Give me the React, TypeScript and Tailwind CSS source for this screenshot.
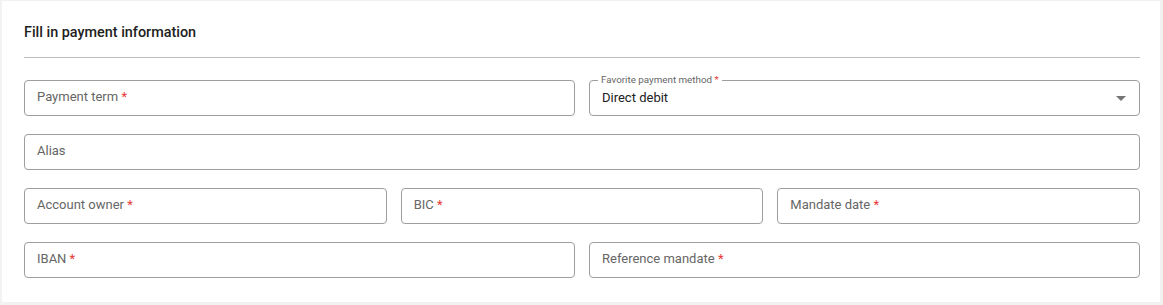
import React from 'react';

const font = { fontFamily: 'Roboto, "Liberation Sans", sans-serif' };

interface FieldProps {
  label: string;
  required?: boolean;
}

const Field: React.FC<FieldProps> = ({ label, required }) => (
  <div className="h-[36px] flex items-center rounded-[4px] border border-[#9e9e9e] px-[12px] pb-[3px] text-[13px] text-[#666666] bg-white min-w-0">
    <span>
      {label}
      {required && <span className="text-[#e53935]"> *</span>}
    </span>
  </div>
);

// select with outlined floating label
const SelectField: React.FC = () => (
  <div className="relative h-[36px] flex items-center rounded-[4px] border border-[#9e9e9e] pl-[12px] pr-[12px] bg-white">
    <span className="absolute -top-[8px] left-[8px] bg-white px-[3px] text-[9.8px] leading-[14px] text-[#666666]">
      Favorite payment method<span className="text-[#e53935]"> *</span>
    </span>
    <span className="flex-1 pb-[1px] text-[13px] text-[#212121]">Direct debit</span>
    <svg width="10" height="5" viewBox="0 0 10 5" className="mr-[1px]">
      <path d="M0 0 L10 0 L5 5 Z" fill="#757575" />
    </svg>
  </div>
);

export default function App() {
  return (
    <div className="w-[1163px] h-[305px] bg-[#f2f2f2] pt-[1px] pl-[2px]" style={font}>
      <div className="w-[1158px] h-[301px] bg-white pt-[22px] pl-[22px] pr-[20px]">
        <h2 className="text-[14.4px] leading-[20px] font-medium text-[#212121]">Fill in payment information</h2>
        <div className="mt-[14px] h-px bg-[#bdbdbd]" />
        <div className="mt-[22px] flex flex-col gap-[18px]">
          <div className="grid grid-cols-2 gap-[14px]">
            <Field label="Payment term" required />
            <SelectField />
          </div>
          <Field label="Alias" />
          <div className="grid grid-cols-3 gap-[14px]">
            <Field label="Account owner" required />
            <Field label="BIC" required />
            <Field label="Mandate date" required />
          </div>
          <div className="grid grid-cols-2 gap-[14px]">
            <Field label="IBAN" required />
            <Field label="Reference mandate" required />
          </div>
        </div>
      </div>
    </div>
  );
}
